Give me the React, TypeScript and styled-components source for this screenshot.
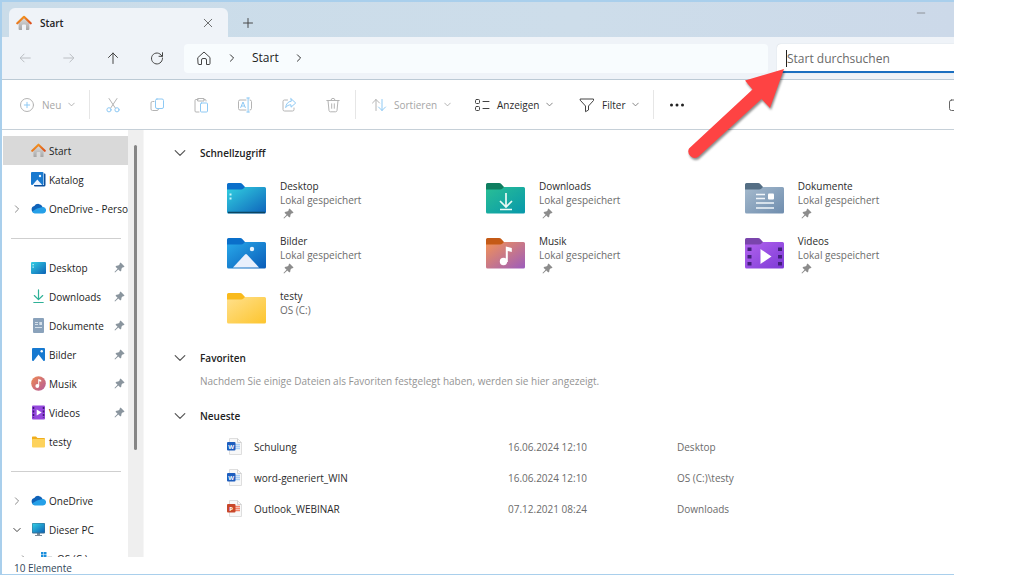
import React from "react";
import styled, { createGlobalStyle } from "styled-components";

const GlobalStyle = createGlobalStyle`
  *, *::before, *::after { box-sizing: border-box; }
  body { margin: 0; background: #fff; font-family: "Open Sans", "Noto Sans", sans-serif; font-size: 10px; line-height: 14px; color: #2b2b2b; }
  button, input { font: inherit; color: inherit; }
  button { border: 0; padding: 0; background: none; text-align: left; }
  h2, p, ul { margin: 0; padding: 0; font-weight: 400; font-size: inherit; }
  ul { list-style: none; }
  svg { display: block; flex: none; }
`;

/* ---------- layout ---------- */

const Page = styled.div`
  min-height: 100vh;
  padding-right: 70px;
`;

const Window = styled.div`
  position: relative;
  display: flex;
  flex-direction: column;
  height: calc(100vh - 7px);
  border: solid #a9cfec;
  border-width: 2px 0 1px 2px;
  overflow: hidden;
  background: #fff;
`;

const TabStrip = styled.header`
  display: flex;
  align-items: flex-end;
  height: 35px;
  padding-left: 7px;
  background: linear-gradient(90deg, #cadce9, #cdddea 60%, #ccd9e9);
`;

const Tab = styled.div`
  display: flex;
  align-items: center;
  gap: 8px;
  width: 219px;
  height: 29px;
  padding: 0 14px 0 7px;
  border-radius: 6px 6px 0 0;
  background: #eff3f8;
  font-weight: 600;
  color: #222;
`;

const TabTitle = styled.span`
  flex: 1;
`;

const IconButton = styled.button<{ $width?: number }>`
  display: flex;
  align-items: center;
  justify-content: center;
  width: ${(p) => p.$width ?? 44}px;
  height: 28px;
  flex: none;
`;

const CloseButton = styled(IconButton)`
  width: 12px;
`;

const MinimizeButton = styled(IconButton)`
  align-self: flex-start;
  height: 22px;
  margin: 0 11px 0 auto;
`;

const NavBar = styled.div`
  display: flex;
  align-items: center;
  height: 43px;
  padding-left: 1px;
  border-bottom: 1px solid #bccad5;
  background: #eff3f8;
`;

const AddressBar = styled.nav`
  display: flex;
  align-items: center;
  flex: 1;
  gap: 16px;
  height: 29px;
  margin: 0 9px 0 5px;
  padding-left: 12px;
  border-radius: 4px;
  background: #f8fcfe;
  font-size: 12px;
`;

const Crumb = styled.a`
  color: #222;
  text-decoration: none;
`;

const SearchField = styled.label`
  position: relative;
  width: 177px;
  height: 29px;
  border-radius: 4px 0 0 0;
  border-bottom: 2px solid #1b6fc0;
  background: #fff;
  box-shadow: 0 0 1px #b8c0c8;
`;

const SearchInput = styled.input`
  width: 100%;
  height: 27px;
  padding: 2px 10px 0;
  border: 0;
  outline: 0;
  background: none;
  font-size: 12px;
  &::placeholder { color: #6a6a6a; opacity: 1; }
`;

const Caret = styled.span`
  position: absolute;
  left: 9px;
  top: 6px;
  width: 1px;
  height: 17px;
  background: #222;
`;

const CommandBar = styled.div`
  display: flex;
  align-items: center;
  height: 50px;
  flex: none;
  border-bottom: 1px solid #c6d0d8;
  background: #fff;
`;

const CommandButton = styled.button<{ $width: number; $indent?: number; $muted?: boolean }>`
  display: flex;
  align-items: center;
  gap: 7px;
  width: ${(p) => p.$width}px;
  height: 29px;
  padding-left: ${(p) => p.$indent ?? 13}px;
  color: ${(p) => (p.$muted ? "#a6a6a6" : "#2b2b2b")};
`;

const Divider = styled.span`
  width: 1px;
  height: 29px;
  margin-right: 1px;
  background: #e6e6e6;
`;

const DetailsButton = styled(IconButton)`
  width: 16px;
  margin: 0 -10px 0 auto;
`;

const Body = styled.div`
  display: grid;
  grid-template-columns: 126px 15px minmax(0, 1fr);
  flex: 1;
  min-height: 0;
`;

const Sidebar = styled.nav`
  padding: 6px 0 0 1px;
  overflow: hidden;
`;

const Track = styled.div`
  padding: 15px 6px 0;
  background: #efefef;
`;

const Thumb = styled.div`
  height: 74%;
  border-radius: 2px;
  background: #868686;
`;

const SideItem = styled.button<{ $active?: boolean }>`
  display: grid;
  grid-template-columns: 28px 15px minmax(0, 1fr) auto;
  align-items: center;
  width: 100%;
  height: 29px;
  padding-right: 3px;
  background: ${(p) => (p.$active ? "#d9d9d9" : "transparent")};
  color: #1d1d1d;
`;

const SideChevron = styled.span`
  padding-left: 10px;
`;

const SideLabel = styled.span`
  padding-left: 3px;
  margin-right: -3px;
  overflow: hidden;
  white-space: nowrap;
`;

const SideRule = styled.li`
  display: flex;
  align-items: center;
  height: 30px;
  padding: 0 7px 0 8px;
  &::before { content: ""; flex: 1; height: 1px; background: #cfcfcf; }
`;

const Main = styled.main`
  padding: 13px 0 0 30px;
  border-left: 1px solid #f6f6f6;
  overflow: hidden;
`;

const SectionButton = styled.button`
  display: flex;
  align-items: center;
  gap: 14px;
  height: 20px;
  font-weight: 600;
  color: #222;
`;

const Tiles = styled.ul`
  display: grid;
  grid-template-columns: 5fr 5fr 4fr;
  grid-auto-rows: 55px;
  padding: 16px 2px 4px 53px;
`;

const Tile = styled.button`
  display: flex;
  gap: 13px;
  color: #6b6b6b;
`;

const TileIcon = styled.span`
  padding-top: 4px;
`;

const TileText = styled.span`
  display: flex;
  flex-direction: column;
`;

const TileName = styled.span`
  color: #2b2b2b;
`;

const TilePin = styled.span`
  padding: 1px 0 0 3px;
`;

const Hint = styled.p`
  padding: 6px 0 18px 26px;
  color: #949494;
`;

const Recent = styled.table`
  width: calc(100% - 53px);
  margin: 5px 0 0 53px;
  border-collapse: collapse;
  table-layout: fixed;
  color: #6b6b6b;
`;

const Cell = styled.td<{ $width?: string }>`
  width: ${(p) => p.$width ?? "auto"};
  height: 31px;
  padding: 0;
`;

const FileLink = styled.a`
  display: flex;
  align-items: center;
  gap: 12px;
  color: #2b2b2b;
  text-decoration: none;
`;

const StatusBar = styled.footer`
  height: 17px;
  padding: 4px 0 0 12px;
  color: #33475a;
`;

const Pointer = styled.svg`
  position: absolute;
  top: 58px;
  right: 164px;
  filter: drop-shadow(1px 2px 1px rgba(0, 0, 0, 0.45));
`;

/* ---------- icons ---------- */

type LineProps = { size?: number; color?: string; width?: number; children: React.ReactNode };

const Line = ({ size = 16, color = "#444", width = 1, children }: LineProps) => (
  <svg width={size} height={size} viewBox="0 0 16 16" fill="none" stroke={color} strokeWidth={width} strokeLinecap="round" strokeLinejoin="round" aria-hidden="true">
    {children}
  </svg>
);

const GREY = "#b4b4b4";
const SKY = "#8ec9f4";

const Chevron = ({ dir, size = 8, color = "#555" }: { dir: "right" | "down"; size?: number; color?: string }) => (
  <svg width={size} height={size} viewBox="0 0 8 8" fill="none" stroke={color} strokeLinecap="round" strokeLinejoin="round" aria-hidden="true">
    <path d={dir === "right" ? "M2.4 .8 5.6 4 2.4 7.2" : "M.8 2.4 4 5.6 7.2 2.4"} strokeWidth={size > 10 ? 0.8 : 1} />
  </svg>
);

const HomeColor = ({ size = 15 }: { size?: number }) => (
  <svg width={size} height={size} viewBox="0 0 16 16" aria-hidden="true">
    <defs>
      <linearGradient id="roof" x1="0" y1="0" x2="1" y2="1"><stop stopColor="#f7a320" /><stop offset="1" stopColor="#dc4f1e" /></linearGradient>
      <linearGradient id="wall" x1="0" y1="0" x2="0" y2="1"><stop stopColor="#dcdcdc" /><stop offset="1" stopColor="#a6a6a6" /></linearGradient>
    </defs>
    <path d="M2.600 7.500 8 2.600l5.400 4.900V14a1 1 0 0 1-1 1H10v-4.400a1 1 0 0 0-1-1H7a1 1 0 0 0-1 1V15H3.600a1 1 0 0 1-1-1z" fill="url(#wall)" />
    <path d="M1.300 8.300 8 1.800l6.700 6.500" fill="none" stroke="url(#roof)" strokeWidth="2.200" strokeLinecap="round" strokeLinejoin="round" />
  </svg>
);

const Pin = ({ color = "#8a959e" }: { color?: string }) => (
  <svg width="11" height="11" viewBox="0 0 12 12" fill={color} aria-hidden="true">
    <path d="M7.200.5 11.500 4.800 10.500 5.800 9.600 5.700 8.100 7.400 8 9.400 6.900 10.400 4.700 8.200 1.200 11.500.500 10.900 3.900 7.400 1.600 5.200 2.700 4 4.700 3.900 6.300 2.400 6.200 1.500z" />
  </svg>
);

const GalleryIcon = () => (
  <svg width="15" height="15" viewBox="0 0 15 15" aria-hidden="true">
    <path d="M13 1.500h.5a1 1 0 0 1 1 1V13a1.500 1.500 0 0 1-1.500 1.500H4a1 1 0 0 1-1-1V13h10z" fill="#0d4f9c" />
    <rect width="12.500" height="13" rx="1" fill="#1879cf" />
    <path d="M1.500 13 6.300 7.500 11.200 13z" fill="#eef5ff" /><circle cx="9" cy="4" r="1.200" fill="#eef5ff" />
  </svg>
);

const CloudIcon = () => (
  <svg width="15" height="11" viewBox="0 0 15 11" aria-hidden="true">
    <path d="M4 10a3.500 3.500 0 0 1-.7-6.900A4.600 4.600 0 0 1 11.600 4 3.200 3.200 0 0 1 12 10z" fill="#0f62b8" />
    <path d="M6 5.500 11.700 4A3.100 3.100 0 0 1 12 10.400H3.600A3 3 0 0 1 1 8.600z" fill="#26a0e8" />
  </svg>
);

const DesktopSmall = () => (
  <svg width="15" height="12" viewBox="0 0 15 12" aria-hidden="true">
    <defs><linearGradient id="desk" x1="0" y1="0" x2="1" y2="1"><stop stopColor="#33cfe4" /><stop offset="1" stopColor="#0d62b5" /></linearGradient></defs>
    <rect width="15" height="12" rx="1" fill="url(#desk)" />
    <path d="M1.500 2h1.300v1.300H1.500zM1.500 4.500h1.300v1.300H1.500z" fill="#bdf3fa" />
  </svg>
);

const DownloadSmall = () => <Line size={15} color="#2fb197" width={1.300}><path d="M8 1v10M3.500 7 8 11.300 12.500 7M3 14.400h10" /></Line>;

const DocSmall = () => (
  <svg width="15" height="15" viewBox="0 0 15 15" aria-hidden="true">
    <rect x="2" width="11" height="15" rx="1" fill="#8aa2bb" />
    <path d="M4 4.500h3M4 6.500h3M4 9.500h7" stroke="#d5e0ea" /><path d="M8.300 4h2.700v3H8.300z" fill="#d5e0ea" />
  </svg>
);

const PictureSmall = () => (
  <svg width="15" height="15" viewBox="0 0 15 15" aria-hidden="true">
    <rect x="1" y="1" width="13" height="13" rx="1" fill="#1779d0" /><path d="M2.500 14 7.500 7.500 12.500 14z" fill="#fff" /><circle cx="10.700" cy="4.200" r="1.200" fill="#fff" />
  </svg>
);

const MusicSmall = () => (
  <svg width="15" height="15" viewBox="0 0 15 15" aria-hidden="true">
    <defs><linearGradient id="disc" x1="0" y1="0" x2="1" y2="1"><stop stopColor="#ef8a52" /><stop offset="1" stopColor="#b45a9a" /></linearGradient></defs>
    <circle cx="7.500" cy="7.500" r="7.300" fill="url(#disc)" />
    <circle cx="6.300" cy="10" r="1.900" fill="#fff" /><path d="M7.200 3v7h1V5.200l2 .6V4z" fill="#fff" />
  </svg>
);

const VideoSmall = () => (
  <svg width="15" height="15" viewBox="0 0 15 15" aria-hidden="true">
    <rect x="1" y=".5" width="13" height="14" rx="1" fill="#9548dd" />
    <path d="M2.500 2v11M12.500 2v11" stroke="#3e1776" strokeWidth="1.500" strokeDasharray="2 1.500" /><path d="M5.700 4.500 10.700 7.500 5.700 10.500z" fill="#fff" />
  </svg>
);

const FolderSmall = () => (
  <svg width="15" height="12" viewBox="0 0 15 12" aria-hidden="true">
    <path d="M1 1.200Q1 .5 1.700.5H5l1.500 1.500H13q1 0 1 1V5H1z" fill="#f0ae1d" /><rect x="1" y="3" width="13" height="8.500" rx="1" fill="#fdd25c" />
  </svg>
);

const PcIcon = () => (
  <svg width="15" height="13" viewBox="0 0 15 13" aria-hidden="true">
    <path d="M6 10h3v2h2v1H4v-1h2z" fill="#7d8c98" />
    <rect x="1" width="13" height="10.500" rx="1" fill="#3b6f92" /><rect x="1.500" y=".5" width="12" height="9" fill="url(#desk)" />
  </svg>
);

const DriveIcon = () => (
  <svg width="15" height="15" viewBox="0 0 15 15" aria-hidden="true">
    <path d="M8.500 5.500H13l1 3v4H1v-3l1-3h6z" fill="#b9bfc4" />
    <path d="M8 1h2.500v2.500H8zM8 4h2.500v2.500H8zM11 1h2.500v2.500H11zM11 4h2.500v2.500H11z" fill="#1c8fdc" transform="translate(-6 0)" />
  </svg>
);

type FolderKind = "desktop" | "downloads" | "documents" | "pictures" | "music" | "videos" | "plain";

const folderColors: Record<FolderKind, [string, string, string]> = {
  desktop: ["#0a6fca", "#32d0e0", "#0e63bb"],
  downloads: ["#0f7e60", "#2abf95", "#0798ab"],
  documents: ["#546e84", "#a5bacd", "#6f8dae"],
  pictures: ["#0a6fca", "#28a9ea", "#0a5cb8"],
  music: ["#c45a16", "#f39355", "#9c5cbd"],
  videos: ["#7a45ac", "#b264ee", "#7d3ad6"],
  plain: ["#f9ba1c", "#ffe08c", "#fdc52e"],
};

const folderArt: Record<FolderKind, React.ReactNode> = {
  desktop: <><path d="M1 29.500h37" stroke="#0b4562" strokeWidth="1.500" /><path d="M2.500 10.500h2v2h-2zM2.500 14.500h2v2h-2z" fill="#c8f5fa" /></>,
  downloads: <path d="M20 10v13M14 18l6 6 6-6M14 26.500h12" fill="none" stroke="#eafaf5" strokeWidth="1.700" />,
  documents: <><path d="M11 11.500h9M11 15.500h9M11 20h18M11 25h18" stroke="#f1f6fa" strokeWidth="1.700" /><rect x="23" y="10.500" width="6" height="6" rx="1" fill="#fff" /></>,
  pictures: <><path d="M6 29.500 18 16.500q1-1 2 0L32 29.500z" fill="#e9f0fc" /><circle cx="25" cy="11" r="2.200" fill="#e9f4fd" /></>,
  music: <><circle cx="17.500" cy="23.500" r="3.700" fill="#fff" /><path d="M19.800 24V8.500l6 1.500v4l-4-1V24z" fill="#fff" /></>,
  videos: <><path d="M15.500 11 26.500 18.500 15.500 26z" fill="#fff" /><path d="M2.500 9.500h4v3.500h-4zM2.500 17h4v3.500h-4zM2.500 24h4v3.500h-4zM33 9.500h4v3.500h-4zM33 17h4v3.500h-4zM33 24h4v3.500h-4z" fill="#43207c" /></>,
  plain: null,
};

const Folder = ({ kind }: { kind: FolderKind }) => {
  const [back, from, to] = folderColors[kind];
  return (
    <svg width="40" height="32" viewBox="0 0 40 32" aria-hidden="true">
      <defs><linearGradient id={`f-${kind}`} x1="0" y1="0" x2="1" y2="1"><stop stopColor={from} /><stop offset="1" stopColor={to} /></linearGradient></defs>
      <path d="M0 1.500Q0 0 1.500 0H13q1.500 0 2.500 1.200L18 4v4H0z" fill={back} />
      <path d="M0 6.500h14q1.500 0 2.500-1L18 4h19.500Q39 4 39 5.500v23.500q0 1.500-1.500 1.500h-36Q0 30.500 0 29z" fill={`url(#f-${kind})`} />
      {folderArt[kind]}
    </svg>
  );
};

const OfficeFile = ({ letter, color, tint }: { letter: string; color: string; tint: string }) => (
  <svg width="15" height="17" viewBox="0 0 15 17" aria-hidden="true">
    <path d="M2.500.5h8l4 4v12h-12z" fill="#f8f8f8" stroke="#dedede" /><path d="M10.500.5v4h4" fill="none" stroke="#d2d2d2" />
    <path d="M8 6.500h5M8 8.500h5M8 10.500h5" stroke={tint} strokeWidth="1.500" />
    <rect y="4" width="8.500" height="8.500" rx="1" fill={color} />
    <text x="4.200" y="10.500" textAnchor="middle" fontFamily="Open Sans, sans-serif" fontWeight="700" fontSize="6" fill="#fff">{letter}</text>
  </svg>
);

/* ---------- data ---------- */

type SideEntry = { label: string; icon: React.ReactNode; pinned?: boolean; active?: boolean; chevron?: "right" | "down" };

const sideGroups: SideEntry[][] = [
  [
    { label: "Start", icon: <HomeColor />, active: true },
    { label: "Katalog", icon: <GalleryIcon /> },
    { label: "OneDrive - Personal", icon: <CloudIcon />, chevron: "right" },
  ],
  [
    { label: "Desktop", icon: <DesktopSmall />, pinned: true },
    { label: "Downloads", icon: <DownloadSmall />, pinned: true },
    { label: "Dokumente", icon: <DocSmall />, pinned: true },
    { label: "Bilder", icon: <PictureSmall />, pinned: true },
    { label: "Musik", icon: <MusicSmall />, pinned: true },
    { label: "Videos", icon: <VideoSmall />, pinned: true },
    { label: "testy", icon: <FolderSmall /> },
  ],
  [
    { label: "OneDrive", icon: <CloudIcon />, chevron: "right" },
    { label: "Dieser PC", icon: <PcIcon />, chevron: "down" },
  ],
];

const DriveItem = styled(SideItem)`
  grid-template-columns: 36px 15px minmax(0, 1fr);
  ${SideChevron} { padding-left: 17px; }
`;

const tiles: { name: string; place: string; kind: FolderKind; pinned: boolean }[] = [
  { name: "Desktop", place: "Lokal gespeichert", kind: "desktop", pinned: true },
  { name: "Downloads", place: "Lokal gespeichert", kind: "downloads", pinned: true },
  { name: "Dokumente", place: "Lokal gespeichert", kind: "documents", pinned: true },
  { name: "Bilder", place: "Lokal gespeichert", kind: "pictures", pinned: true },
  { name: "Musik", place: "Lokal gespeichert", kind: "music", pinned: true },
  { name: "Videos", place: "Lokal gespeichert", kind: "videos", pinned: true },
  { name: "testy", place: "OS (C:)", kind: "plain", pinned: false },
];

const word = <OfficeFile letter="W" color="#1d5dbe" tint="#a9cdf3" />;
const powerpoint = <OfficeFile letter="P" color="#c8472a" tint="#f3846a" />;

const files = [
  { name: "Schulung", date: "16.06.2024 12:10", place: "Desktop", icon: word },
  { name: "word-generiert_WIN", date: "16.06.2024 12:10", place: "OS (C:)\\testy", icon: word },
  { name: "Outlook_WEBINAR", date: "07.12.2021 08:24", place: "Downloads", icon: powerpoint },
];

const tools: { label: string; art: React.ReactNode }[] = [
  { label: "Ausschneiden", art: <><path d="M4 1.500 10.300 11M12 1.500 5.700 11" /><g stroke={SKY}><circle cx="4" cy="12.800" r="2.100" /><circle cx="12" cy="12.800" r="2.100" /></g></> },
  { label: "Kopieren", art: <><path d="M5 4.500H3.500a1.500 1.500 0 0 0-1.500 1.500v6A1.500 1.500 0 0 0 3.500 13.500H8a1.500 1.500 0 0 0 1.500-1.500" /><rect x="6.500" y="2" width="8" height="9.500" rx="1.500" stroke={SKY} /></> },
  { label: "Einfügen", art: <><path d="M5 2.500H3A1 1 0 0 0 2 3.500v10.500a1 1 0 0 0 1 1h3M11 2.500h1a1 1 0 0 1 1 1V4M5 1.500h6v2.500H5z" /><rect x="7.500" y="6" width="7" height="9" rx="1" stroke={SKY} /></> },
  { label: "Umbenennen", art: <><path d="M9 3H3A1.500 1.500 0 0 0 1.500 4.500v7A1.500 1.500 0 0 0 3 13h6M13 3a1.500 1.500 0 0 1 1.500 1.500v7A1.500 1.500 0 0 1 13 13" /><path d="M3.700 10.500 6 5l2.300 5.500M4.500 9h3M9.800 1h2.600M9.800 15h2.600M11.100 1v14" stroke={SKY} /></> },
  { label: "Freigeben", art: <><path d="M6.500 3H3.500A1.500 1.500 0 0 0 2 4.500v8A1.500 1.500 0 0 0 3.500 14h8a1.500 1.500 0 0 0 1.500-1.500V11" /><path d="M10 1.700 14.700 6 10 10.200V7.800C7.500 7.800 6 8.700 4.700 10.600 5 7 7 4.500 10 4.200z" stroke={SKY} /></> },
  { label: "Löschen", art: <path d="M1.800 3.500h12.400M6 3.300a2 2 0 0 1 4 0M3 3.500l1 10a1.500 1.500 0 0 0 1.500 1.300h5A1.500 1.500 0 0 0 12 13.500l1-10M6.700 6.800v4.500M9.300 6.800v4.500" /> },
];

/* ---------- parts ---------- */

const SideRow = ({ entry }: { entry: SideEntry }) => (
  <li>
    <SideItem $active={entry.active}>
      <SideChevron>{entry.chevron && <Chevron dir={entry.chevron} color={entry.chevron === "down" ? "#444" : "#8b8b8b"} />}</SideChevron>
      {entry.icon}
      <SideLabel>{entry.label}</SideLabel>
      {entry.pinned && <Pin />}
    </SideItem>
  </li>
);

const SectionTitle = ({ children }: { children: React.ReactNode }) => (
  <h2>
    <SectionButton aria-expanded="true">
      <Chevron dir="down" size={12} />
      {children}
    </SectionButton>
  </h2>
);

export default function App() {
  return (
    <Page>
      <GlobalStyle />
      <Window>
        <TabStrip>
          <Tab>
            <HomeColor size={16} />
            <TabTitle>Start</TabTitle>
            <CloseButton aria-label="Tab schließen"><Line size={12}><path d="M3 3l10 10M13 3 3 13" /></Line></CloseButton>
          </Tab>
          <IconButton $width={40} aria-label="Neuer Tab"><Line size={12} width={1.300}><path d="M8 2v12M2 8h12" /></Line></IconButton>
          <MinimizeButton aria-label="Minimieren"><Line size={10} color="#666"><path d="M2 8h12" /></Line></MinimizeButton>
        </TabStrip>

        <NavBar>
          <IconButton aria-label="Zurück"><Line size={14} color="#b3b7bb"><path d="M14 8H3M7 3.500 2.500 8 7 12.500" /></Line></IconButton>
          <IconButton aria-label="Vorwärts"><Line size={14} color="#b3b7bb"><path d="M2 8h11M9 3.500 13.500 8 9 12.500" /></Line></IconButton>
          <IconButton aria-label="Nach oben"><Line><path d="M8 13.500V3M3.500 7.500 8 3l4.500 4.500" /></Line></IconButton>
          <IconButton aria-label="Aktualisieren"><Line><path d="M13.300 7A5.500 5.500 0 1 0 13.500 8.500M13.500 2.700V6.300H10" /></Line></IconButton>
          <AddressBar aria-label="Adresse">
            <Line><path d="M2 7.500 8 2l6 5.500V13.500a1 1 0 0 1-1 1h-2.500V10A1.500 1.500 0 0 0 9 8.500H7A1.500 1.500 0 0 0 5.500 10v4.500H3a1 1 0 0 1-1-1z" /></Line>
            <Chevron dir="right" color="#333" />
            <Crumb href="#start">Start</Crumb>
            <Chevron dir="right" color="#333" />
          </AddressBar>
          <SearchField>
            <SearchInput type="text" placeholder="Start durchsuchen" aria-label="Start durchsuchen" />
            <Caret />
          </SearchField>
        </NavBar>

        <CommandBar>
          <CommandButton $width={87} $indent={17} $muted>
            <Line color={GREY}><circle cx="8" cy="8" r="6.500" /><path d="M8 5.300v5.400M5.300 8h5.400" stroke={SKY} /></Line>
            Neu
            <Chevron dir="down" size={7} color="#aaa" />
          </CommandButton>
          <Divider />
          {tools.map((t) => (
            <IconButton key={t.label} aria-label={t.label}><Line color={GREY}>{t.art}</Line></IconButton>
          ))}
          <Divider />
          <CommandButton $width={104} $indent={14} $muted>
            <Line color={GREY}><path d="M5 13.500V2.500M1.500 6 5 2.500 8.500 6" /><path d="M11 2.500v11M7.500 10l3.500 3.500 3.500-3.500" stroke={SKY} /></Line>
            Sortieren
            <Chevron dir="down" size={7} color="#aaa" />
          </CommandButton>
          <CommandButton $width={105}>
            <Line><rect x="1.500" y="2.500" width="4" height="4" rx="1" /><rect x="1.500" y="9.500" width="4" height="4" rx="1" /><path d="M9 4.500h6M9 11.500h6" /></Line>
            Anzeigen
            <Chevron dir="down" size={7} color="#777" />
          </CommandButton>
          <CommandButton $width={87}>
            <Line><path d="M1.500 2h13v1.500L9.500 9v4L6.500 14.700V9L1.500 3.500z" /></Line>
            Filter
            <Chevron dir="down" size={7} color="#777" />
          </CommandButton>
          <Divider />
          <IconButton aria-label="Weitere Optionen">
            <svg width="16" height="16" viewBox="0 0 16 16" fill="#222" aria-hidden="true"><circle cx="2.500" cy="8" r="1.500" /><circle cx="8" cy="8" r="1.500" /><circle cx="13.500" cy="8" r="1.500" /></svg>
          </IconButton>
          <DetailsButton aria-label="Details"><Line color="#666"><rect x="1.500" y="3" width="13" height="10.500" rx="2" /><path d="M10 3v10.500" /></Line></DetailsButton>
        </CommandBar>

        <Body>
          <Sidebar aria-label="Navigation">
            <ul>
              {sideGroups.map((group, i) => (
                <React.Fragment key={i}>
                  {i > 0 && <SideRule />}
                  {group.map((entry) => <SideRow key={entry.label} entry={entry} />)}
                </React.Fragment>
              ))}
              <li>
                <DriveItem>
                  <SideChevron><Chevron dir="right" color="#8b8b8b" /></SideChevron>
                  <DriveIcon />
                  <SideLabel>OS (C:)</SideLabel>
                </DriveItem>
              </li>
            </ul>
          </Sidebar>
          <Track><Thumb /></Track>

          <Main>
            <SectionTitle>Schnellzugriff</SectionTitle>
            <Tiles>
              {tiles.map((t) => (
                <li key={t.name}>
                  <Tile>
                    <TileIcon><Folder kind={t.kind} /></TileIcon>
                    <TileText>
                      <TileName>{t.name}</TileName>
                      <span>{t.place}</span>
                      {t.pinned && <TilePin><Pin color="#8c8c8c" /></TilePin>}
                    </TileText>
                  </Tile>
                </li>
              ))}
            </Tiles>

            <SectionTitle>Favoriten</SectionTitle>
            <Hint>Nachdem Sie einige Dateien als Favoriten festgelegt haben, werden sie hier angezeigt.</Hint>

            <SectionTitle>Neueste</SectionTitle>
            <Recent>
              <tbody>
                {files.map((f) => (
                  <tr key={f.name}>
                    <Cell $width="281px"><FileLink href="#datei">{f.icon}{f.name}</FileLink></Cell>
                    <Cell $width="169px">{f.date}</Cell>
                    <Cell>{f.place}</Cell>
                  </tr>
                ))}
              </tbody>
            </Recent>
          </Main>
        </Body>

        <StatusBar>10 Elemente</StatusBar>

        <Pointer width="112" height="108" viewBox="678 60 112 108" aria-hidden="true">
          <path d="M784 69 770 108 761.500 99 698 157A6.500 6.500 0 0 1 689 148.500L752.500 89.500 745 80.500z" fill="#fe4343" />
        </Pointer>
      </Window>
    </Page>
  );
}
